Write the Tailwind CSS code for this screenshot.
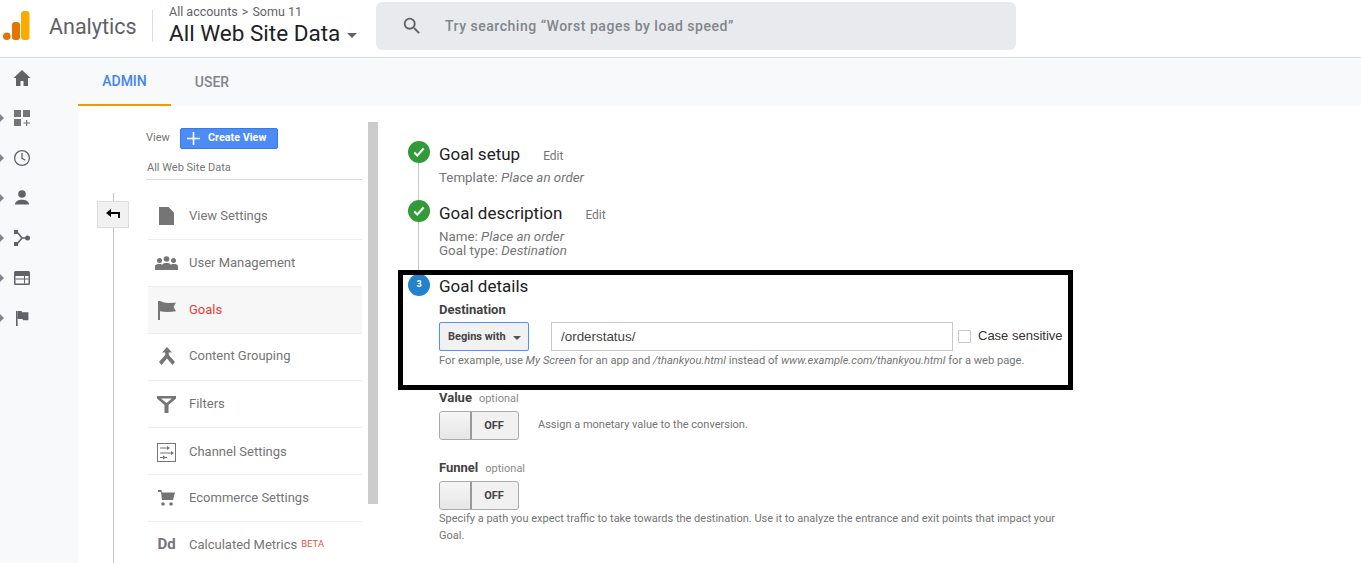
<!DOCTYPE html>
<html><head><meta charset="utf-8"><script src="https://cdn.jsdelivr.net/npm/@tailwindcss/browser@4"></script></head>
<body class="bg-white overflow-hidden font-['Roboto',sans-serif] text-[#5f6368]">
<div class="relative w-[1361px] h-[563px] overflow-hidden">
<header class="h-[58px] flex items-start border-b border-[#dadce0] bg-white">
  <svg class="ml-[3px] mt-[11px] shrink-0" width="27" height="30" viewBox="0 0 27 30"><rect x="18" y="0" width="8.5" height="29" rx="3" fill="#f9ab00"/><rect x="9" y="11" width="8" height="18" rx="3" fill="#e37400"/><circle cx="3.8" cy="25.3" r="3.8" fill="#e37400"/></svg>
  <div class="ml-[19px] mt-[13px] text-[21.5px] leading-[28px] text-[#5f6368] w-[103px]">Analytics</div>
  <div class="w-px h-[32px] bg-[#dadce0] mt-[10px]"></div>
  <div class="ml-[16px] w-[207px] shrink-0">
    <div class="text-[12.5px] leading-[15px] mt-[4px] text-[#5f6368] whitespace-nowrap">All accounts <span class="mx-[1px]">&gt;</span> Somu 11</div>
    <div class="flex items-center mt-[1px]"><span class="text-[22.5px] leading-[27px] text-[#202124] whitespace-nowrap">All Web Site Data</span><span class="ml-[7px] mt-[3px] w-0 h-0 border-x-[5px] border-x-transparent border-t-[5px] border-t-[#5f6368]"></span></div>
  </div>
  <div class="w-[640px] h-[48px] mt-[2px] bg-[#e8eaed] rounded-md flex items-center">
    <svg class="ml-[25px]" width="22" height="22" viewBox="0 0 24 24" fill="#5f6368"><path d="M15.5 14h-.79l-.28-.27A6.47 6.47 0 0 0 16 9.5 6.5 6.5 0 1 0 9.5 16c1.61 0 3.09-.59 4.23-1.57l.27.28v.79l5 4.99L20.49 19l-4.99-5zm-6 0C7.01 14 5 11.99 5 9.5S7.01 5 9.5 5 14 7.01 14 9.5 11.99 14 9.5 14z"/></svg>
    <span class="ml-[22px] text-[14px] font-medium text-[#80868b] tracking-[0.52px] whitespace-nowrap">Try searching “Worst pages by load speed”</span>
  </div>
</header>
<div class="flex h-[505px]">
  <aside class="w-[78px] shrink-0 bg-[#f8f9fa] flex flex-col pt-[11px]">
    <div class="h-[40px] flex pl-[13px]"><svg width="18" height="18" viewBox="0 0 18 18" fill="#5f6368"><path d="M9 1 0.5 9H3v8h4.500v-5h3v5H15V9h2.500z"/></svg></div>
    <div class="h-[40px] flex items-start relative pl-[13px]"><span class="absolute left-0 top-[5px] w-0 h-0 border-y-[4px] border-y-transparent border-l-[4px] border-l-[#80868b]"></span><svg width="18" height="18" viewBox="0 0 18 18" fill="#757575"><rect x="1" y="1" width="7" height="7"/><rect x="10" y="1" width="7" height="7"/><rect x="1" y="10" width="7" height="7"/><path d="M13 11h1.200v2.400H17v1.200h-2.800V17H13v-2.400h-2.500v-1.200H13z"/></svg></div>
    <div class="h-[40px] flex items-start relative pl-[13px]"><span class="absolute left-0 top-[5px] w-0 h-0 border-y-[4px] border-y-transparent border-l-[4px] border-l-[#80868b]"></span><svg width="18" height="18" viewBox="0 0 18 18" fill="none" stroke="#5f6368" stroke-width="1.300"><circle cx="9" cy="9" r="7.400"/><path d="M9 4v5.300l3.300 2"/></svg></div>
    <div class="h-[40px] flex items-start relative pl-[13px]"><span class="absolute left-0 top-[5px] w-0 h-0 border-y-[4px] border-y-transparent border-l-[4px] border-l-[#80868b]"></span><svg width="18" height="18" viewBox="0 0 18 18" fill="#5f6368"><circle cx="9" cy="5" r="3.800"/><path d="M2 15.500c0-3.400 4-4.800 7-4.800s7 1.400 7 4.800z"/></svg></div>
    <div class="h-[40px] flex items-start relative pl-[13px]"><span class="absolute left-0 top-[5px] w-0 h-0 border-y-[4px] border-y-transparent border-l-[4px] border-l-[#80868b]"></span><svg width="18" height="18" viewBox="0 0 18 18" fill="#5f6368"><rect x="1" y="1" width="4" height="4"/><rect x="1" y="13" width="4" height="4"/><circle cx="14.500" cy="9" r="2.500"/><path d="M4 3l5 6-5 6M9 9h4" fill="none" stroke="#5f6368" stroke-width="1.600"/></svg></div>
    <div class="h-[40px] flex items-start relative pl-[13px]"><span class="absolute left-0 top-[5px] w-0 h-0 border-y-[4px] border-y-transparent border-l-[4px] border-l-[#80868b]"></span><svg width="18" height="18" viewBox="0 0 18 18" fill="none"><rect x="1" y="2" width="16" height="14" rx="1.500" fill="#5f6368"/><rect x="2.500" y="7" width="13" height="7.500" fill="#f8f9fa"/><rect x="2.500" y="9.500" width="13" height="1" fill="#5f6368"/><rect x="11" y="7" width="1" height="7.500" fill="#5f6368"/></svg></div>
    <div class="h-[40px] flex items-start relative pl-[13px]"><span class="absolute left-0 top-[5px] w-0 h-0 border-y-[4px] border-y-transparent border-l-[4px] border-l-[#80868b]"></span><svg width="18" height="18" viewBox="0 0 18 18" fill="#5f6368"><rect x="3" y="2" width="1.600" height="15"/><path d="M4.600 2h4l.4 1.200h6.400v8H10l-.4-1.200h-5z"/></svg></div>
  </aside>
  <main class="flex-1 flex flex-col min-w-0">
    <nav class="h-[48px] bg-[#f8f9fa] flex shrink-0 text-[14px] font-medium">
      <div class="w-[93px] h-[48px] border-b-2 border-[#f29900] text-[#4285f4] flex items-center justify-center">ADMIN</div>
      <div class="w-[82px] flex items-center justify-center text-[#80868b]">USER</div>
    </nav>
    <div class="flex flex-1 min-h-0">
      <section class="w-[290px] shrink-0 flex relative">
        <div class="w-[68px] shrink-0 relative">
          <div class="absolute left-[35px] top-[87px] bottom-0 w-px bg-[#c6c6c6]"></div>
          <div class="absolute left-[19px] top-[95px] w-[32px] h-[27px] pb-[3px] bg-[#f1f1f1] border border-[#dcdcdc] flex items-center justify-center"><svg width="14" height="9" viewBox="0 0 14 9" fill="#000"><path d="M0 4 5 0v3h9v6h-2V5H5v3z"/></svg></div>
        </div>
        <div class="w-[216px] shrink-0">
          <div class="flex items-center mt-[22px] h-[21px] text-[11px] text-[#757575]"><span class="w-[34px]">View</span>
            <span class="w-[98px] h-[21px] bg-[#4d8cf5] border border-[#3b78e7] rounded-[2px] flex items-center text-white font-bold text-[10.800px]"><svg class="ml-[6px] mr-[8px]" width="13" height="13" viewBox="0 0 13 13" fill="#fff"><path d="M5.700 0h1.600v5.700H13v1.600H7.300V13H5.700V7.300H0V5.700h5.700z"/></svg>Create View</span></div>
          <div class="mt-[12px] h-[19px] w-[216px] border-b border-[#d9d9d9] text-[11px] leading-[14px] text-[#757575] pl-[1px]">All Web Site Data</div>
          <div class="text-[13px] text-[#757575] ml-[2px] w-[214px]">
            <div class="h-[60px] pt-[13px] border-b border-[#eeeeee] flex items-center"><span class="w-[37px] mr-[4px] flex justify-center"><svg width="15" height="18" viewBox="0 0 15 18" fill="#757575"><path d="M0 0h9.500L15 5.500V18H0z"/></svg></span>View Settings</div>
            <div class="h-[47px] border-b border-[#eeeeee] flex items-center"><span class="w-[37px] mr-[4px] flex justify-center"><svg width="23" height="14" viewBox="0 0 23 14" fill="#757575"><circle cx="4.500" cy="4.500" r="2.500"/><circle cx="11.500" cy="3" r="2.800"/><circle cx="18.500" cy="4.500" r="2.500"/><path d="M0 14v-3.500C0 8.500 2.500 8 4.500 8S7 8.500 7 9c1-2 3-2 4.500-2s3.500 0 4.500 2c0-.5 .5-1 2.500-1s4.500 .5 4.500 2.500V14z"/></svg></span>User Management</div>
            <div class="h-[47px] border-b border-[#eeeeee] bg-[#f7f7f7] flex items-center text-[#db4437]"><span class="w-[37px] mr-[4px] flex justify-center"><svg width="18" height="19" viewBox="0 0 18 19" fill="#757575"><rect x="0" y="0" width="2" height="19"/><path d="M2 0c3 1 5 2 8 2l8 -.2-2.500 4 2.500 4.500c-5 .5-10 1-16 0z"/></svg></span>Goals</div>
            <div class="h-[47px] pb-[2px] border-b border-[#eeeeee] flex items-center"><span class="w-[37px] mr-[4px] flex justify-center"><svg width="16" height="18" viewBox="0 0 16 18" fill="#757575"><path d="M8 0l5 5.500h-3.200v2.500L16 15l-2.500 3-5.500-6.500L2.500 18 0 15l6.200-7V5.500H3z"/></svg></span>Content Grouping</div>
            <div class="h-[47px] border-b border-[#eeeeee] flex items-center"><span class="w-[37px] mr-[4px] flex justify-center"><svg width="19" height="17" viewBox="0 0 19 17" fill="#757575"><path d="M0 0h19v2.500l-7.500 6.500V17h-4V9L0 2.500zM4 2.500l5.500 4.500L15 2.500z" fill-rule="evenodd"/></svg></span>Filters</div>
            <div class="h-[47px] pt-[2px] border-b border-[#eeeeee] flex items-center"><span class="w-[37px] mr-[4px] flex justify-center"><svg width="19" height="19" viewBox="0 0 19 19" fill="none" stroke="#757575"><rect x=".5" y=".5" width="18" height="18"/><path d="M3 5h7M3 10h11M6 14.500h-3M10 14.500h-2" stroke-width="1.200"/><path d="M10 3v4l3-2zM14 8v4l3-2zM6 12.500v4l3-2z" fill="#757575" stroke="none"/></svg></span>Channel Settings</div>
            <div class="h-[47px] border-b border-[#eeeeee] flex items-center"><span class="w-[37px] mr-[4px] flex justify-center"><svg width="17" height="16" viewBox="0 0 17 16" fill="#757575"><path d="M0 0h3.500l.5 2.500h13L15 10H4L3 2H0z"/><circle cx="5" cy="14" r="1.800"/><circle cx="13" cy="14" r="1.800"/></svg></span>Ecommerce Settings</div>
            <div class="h-[47px] pb-[2px] flex items-center"><span class="w-[37px] mr-[4px] flex justify-center text-[15px] font-bold">Dd</span>Calculated Metrics<span class="ml-[4px] text-[9.500px] text-[#e8553a]">BETA</span></div>
          </div>
        </div>
      </section>
      <div class="w-[10px] h-[382px] mt-[16px] bg-[#cccccc] shrink-0"></div>
      <section class="flex-1 pl-[30px] relative text-[13.350px]">
        <div class="absolute left-[40px] top-[50px] w-px h-[130px] bg-[#c6c6c6]"></div>
        <div class="absolute left-[30px] top-[35px] w-[22px] h-[22px] rounded-full bg-[#339a3a] flex items-center justify-center"><svg width="14" height="14" viewBox="0 0 24 24" fill="none" stroke="#fff" stroke-width="3.500"><path d="M4 13l5 5L20 6"/></svg></div>
        <div class="absolute left-[30px] top-[94px] w-[22px] h-[22px] rounded-full bg-[#339a3a] flex items-center justify-center"><svg width="14" height="14" viewBox="0 0 24 24" fill="none" stroke="#fff" stroke-width="3.500"><path d="M4 13l5 5L20 6"/></svg></div>
        <div class="absolute left-[30px] top-[168px] w-[22px] h-[22px] rounded-full bg-[#2481cc] flex items-center justify-center text-white text-[9px] font-bold">3</div>
        <div class="pl-[31px]">
          <div class="pt-[37px] flex items-baseline"><span class="text-[17px] leading-[22px] text-[#212121]">Goal setup</span><span class="ml-[23px] text-[12px] text-[#757575]">Edit</span></div>
          <div class="leading-[14px] mt-[6px] text-[#757575]">Template: <i>Place an order</i></div>
          <div class="mt-[17px] flex items-baseline"><span class="text-[17px] leading-[22px] text-[#212121]">Goal description</span><span class="ml-[23px] text-[12px] text-[#757575]">Edit</span></div>
          <div class="leading-[14px] mt-[6px] text-[#757575]">Name: <i>Place an order</i></div>
          <div class="leading-[14px] text-[#757575]">Goal type: <i>Destination</i></div>
          <div class="mt-[17px] text-[17px] leading-[22px] text-[#212121]">Goal details</div>
          <div class="mt-[5px] text-[13px] leading-[16px] font-bold text-[#424242]">Destination</div>
          <div class="flex items-center mt-[4px]">
            <div class="w-[90px] h-[29px] pt-[2px] bg-[#f1f1f1] border border-[#4d90fe] rounded-[2px] text-[11px] font-bold text-[#444] flex items-center pl-[8px]">Begins with<span class="ml-[7px] w-0 h-0 border-x-[4px] border-x-transparent border-t-[4px] border-t-[#555]"></span></div>
            <div class="ml-[22px] w-[402px] h-[29px] pt-[1px] border border-[#c8c8c8] text-[13.400px] font-['Liberation_Sans',sans-serif] text-[#444] flex items-center pl-[9px]">/orderstatus/</div>
            <span class="ml-[5px] w-[13px] h-[13px] border border-[#c8c8c8] bg-white rounded-[1px]"></span>
            <span class="ml-[7px] pb-[2px] text-[13px] font-['Liberation_Sans',sans-serif] text-[#333]">Case sensitive</span>
          </div>
          <div class="mt-[2px] text-[11.150px] leading-[16px] text-[#757575] whitespace-nowrap">For example, use <i>My Screen</i> for an app and <i>/thankyou.html</i> instead of <i>www.example.com/thankyou.html</i> for a web page.</div>
          <div class="mt-[21px] flex items-baseline leading-[16px]"><b class="text-[#424242] text-[13px]">Value</b><span class="ml-[7px] text-[11px] text-[#8a8a8a]">optional</span></div>
          <div class="mt-[4px] flex items-center">
            <div class="w-[80px] h-[29px] flex border border-[#aaaaaa] rounded-[3px] bg-[#f1f1f1]"><span class="w-[32px] bg-linear-to-b from-[#f6f6f6] to-[#e6e6e6] border-r-2 border-[#999] rounded-l-[3px]"></span><span class="flex-1 text-center pr-[2px] text-[11px] leading-[27px] font-bold text-[#444]">OFF</span></div>
            <span class="ml-[19px] text-[11px] text-[#757575]">Assign a monetary value to the conversion.</span>
          </div>
          <div class="mt-[20px] flex items-baseline leading-[16px]"><b class="text-[#424242] text-[13px]">Funnel</b><span class="ml-[7px] text-[11px] text-[#8a8a8a]">optional</span></div>
          <div class="mt-[4px] w-[80px] h-[29px] flex border border-[#aaaaaa] rounded-[3px] bg-[#f1f1f1]"><span class="w-[32px] bg-linear-to-b from-[#f6f6f6] to-[#e6e6e6] border-r-2 border-[#999] rounded-l-[3px]"></span><span class="flex-1 text-center pr-[2px] text-[11px] leading-[27px] font-bold text-[#444]">OFF</span></div>
          <div class="w-[630px] text-[11px] leading-[17px] text-[#757575]">Specify a path you expect traffic to take towards the destination. Use it to analyze the entrance and exit points that impact your Goal.</div>
        </div>
      </section>
    </div>
  </main>
</div>
<div class="absolute left-[398px] top-[270px] w-[675px] h-[120px] border-[5px] border-black pointer-events-none"></div>
</div>
</body></html>
